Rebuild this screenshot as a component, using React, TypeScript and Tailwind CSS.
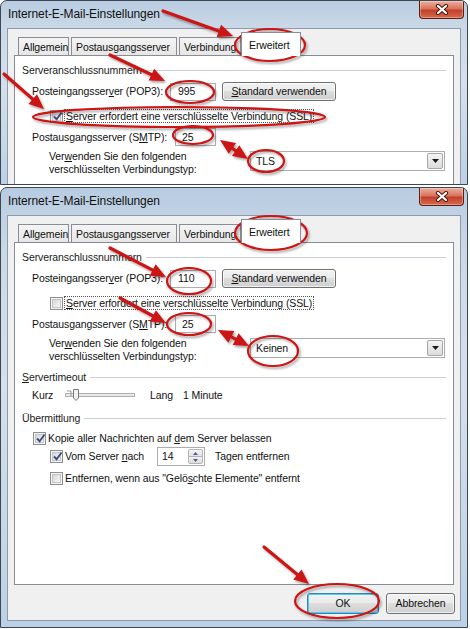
import type { ReactNode } from 'react';

const RED = '#cc1313';

function CloseBtn() {
  return (
    <div className="ml-auto mr-[3px] flex h-[18px] w-[45px] items-center justify-center rounded-b-[4px] border border-t-0 border-[#5a2014] bg-[linear-gradient(180deg,#ebb0a0_0%,#d9735d_45%,#c3402a_55%,#d86a4e_100%)] shadow-[inset_0_0_0_1px_rgba(255,255,255,0.3)]">
      <svg width="14" height="11" viewBox="0 0 14 11">
        <path d="M3 2 L11 9 M11 2 L3 9" stroke="#4a1a10" strokeWidth="4.2" strokeLinecap="round" />
        <path d="M3 2 L11 9 M11 2 L3 9" stroke="#ffffff" strokeWidth="2.2" strokeLinecap="round" />
      </svg>
    </div>
  );
}

function TitleBar() {
  return (
    <div className="flex h-[27px] items-start">
      <span className="mt-[6px] pl-[7px] text-[12px] leading-[15px] tracking-[-0.1px] text-[#111]">Internet-E-Mail-Einstellungen</span>
      <CloseBtn />
    </div>
  );
}

function Tab({ w, children }: { w: string; children: ReactNode }) {
  return (
    <div
      className={`flex h-[18px] shrink-0 items-start overflow-hidden border border-b-0 border-[#898c95] bg-[linear-gradient(180deg,#f4f4f4,#e6e6e6)] pl-[4px] pt-[3px] leading-[13px] ${w}`}
    >
      {children}
    </div>
  );
}

function Tabs() {
  return (
    <div className="flex h-[23px] items-end gap-[2px] pl-[10px]">
      <Tab w="w-[51px]">Allgemein</Tab>
      <Tab w="w-[106px]">Postausgangsserver</Tab>
      <Tab w="w-[62px]">Verbindung</Tab>
      <div className="relative z-10 -mb-px -ml-[2px] flex h-[24px] w-[60px] shrink-0 items-start border border-b-0 border-[#898c95] bg-white pl-[7px] pt-[6px] leading-[13px]">
        Erweitert
      </div>
    </div>
  );
}

function Group({ children }: { children: ReactNode }) {
  return (
    <div className="flex h-[14px] items-center pl-[7px] pr-[7px]">
      <span className="text-[#1a1a1a]">{children}</span>
      <div className="ml-[4px] h-px flex-1 bg-[#c8cfd6]" />
    </div>
  );
}

function Check({ checked }: { checked?: boolean }) {
  return (
    <span className="flex h-[13px] w-[13px] shrink-0 items-center justify-center border border-[#8e8f8f] bg-[#f4f4f4]">
      <span className="relative flex h-[9px] w-[9px] items-center justify-center border border-[#c4c4c4] bg-[linear-gradient(135deg,#d6d6d6,#f8f8f8)]">
        {checked && (
          <svg width="11" height="11" viewBox="0 0 11 11" className="absolute -left-[1px] -top-[2px]">
            <path d="M2 5.5 L4.6 8.2 L9.6 1.5" fill="none" stroke="#3a4f85" strokeWidth="1.9" />
          </svg>
        )}
      </span>
    </span>
  );
}

function Field({ className, children }: { className: string; children: ReactNode }) {
  return (
    <div className={`flex h-[18px] shrink-0 items-center border border-[#abadb3] bg-white ${className}`}>{children}</div>
  );
}

function Btn({ className, children }: { className: string; children: ReactNode }) {
  return (
    <div
      className={`flex shrink-0 items-center justify-center rounded-[3px] border border-[#707070] bg-[linear-gradient(180deg,#f2f2f2_0%,#ebebeb_45%,#dddddd_50%,#cfcfcf_100%)] shadow-[inset_0_0_0_1px_rgba(255,255,255,0.7)] ${className}`}
    >
      {children}
    </div>
  );
}

function Select({ value }: { value: string }) {
  return (
    <div className="mt-[1px] flex h-[20px] w-[195px] shrink-0 items-center border border-[#abadb3] bg-white pl-[5px]">
      <span>{value}</span>
      <div className="ml-auto mr-[1px] flex h-[16px] w-[16px] items-center justify-center rounded-[2px] border border-[#a6a6a6] bg-[linear-gradient(180deg,#f4f4f4,#dcdcdc)]">
        <svg width="7" height="4" viewBox="0 0 7 4">
          <path d="M0 0 H7 L3.5 4 Z" fill="#1a1a1a" />
        </svg>
      </div>
    </div>
  );
}

function PortRows({ pop3, ssl, enc }: { pop3: string; ssl: boolean; enc: string }) {
  return (
    <>
      <div className="mt-[7px]">
        <Group>Serveranschlussnummern</Group>
      </div>
      <div className="mt-[5px] flex h-[19px] items-center pl-[17px]">
        <span className="w-[138px] shrink-0">
          Posteingangsser<u>v</u>er (POP3):
        </span>
        <Field className="w-[46px] pl-[7px]">{pop3}</Field>
        <Btn className="ml-[6px] h-[19px] w-[114px]">
          <span>
            <u>S</u>tandard verwenden
          </span>
        </Btn>
      </div>
      <div className="mt-[8px] flex h-[14px] items-center pl-[35px]">
        <Check checked={ssl} />
        <span className="ml-[1px] border border-dotted border-[#555] px-[1px] leading-[12px]">
          <u>S</u>erver erfordert eine verschlüsselte Verbindung (SSL)
        </span>
      </div>
      <div className="mt-[5px] flex h-[18px] items-center pl-[17px]">
        <span className="w-[143px] shrink-0">
          Postausgangsserver (S<u>M</u>TP):
        </span>
        <Field className="w-[41px] pl-[6px]">25</Field>
      </div>
      <div className="mt-[4px] flex pl-[34px]">
        <div className="w-[201px] shrink-0 leading-[13px]">
          Ver<u>w</u>enden Sie den folgenden
          <br />
          verschlüsselten Verbindungstyp:
        </div>
        <Select value={enc} />
      </div>
    </>
  );
}

function Slider() {
  return (
    <svg width="70" height="14" viewBox="0 0 70 14">
      <rect x="0.5" y="5.5" width="69" height="3" fill="#e7eaea" stroke="#b0b0b0" />
      <path d="M2 3 H6 V8" fill="none" stroke="#9a9a9a" strokeWidth="1" />
      <path d="M8.5 1.5 H13.5 V10 L11 12.5 L8.5 10 Z" fill="#f1f1f1" stroke="#7a7a7a" />
    </svg>
  );
}

function Spinner() {
  return (
    <div className="flex h-[19px] w-[48px] shrink-0 items-center border border-[#abadb3] bg-white pl-[4px]">
      <span>14</span>
      <div className="ml-auto mr-px flex h-[15px] w-[15px] flex-col">
        <div className="flex h-[8px] items-center justify-center rounded-t-[2px] border border-[#b5b5b5] bg-[linear-gradient(180deg,#f6f6f6,#e2e2e2)]">
          <svg width="5" height="3" viewBox="0 0 5 3">
            <path d="M0 3 H5 L2.5 0 Z" fill="#4b6189" />
          </svg>
        </div>
        <div className="-mt-px flex h-[8px] items-center justify-center rounded-b-[2px] border border-[#b5b5b5] bg-[linear-gradient(180deg,#f0f0f0,#dedede)]">
          <svg width="5" height="3" viewBox="0 0 5 3">
            <path d="M0 0 H5 L2.5 3 Z" fill="#4b6189" />
          </svg>
        </div>
      </div>
    </div>
  );
}

const frame =
  'w-[468px] rounded-t-[7px] border border-[#3d4753] bg-[linear-gradient(180deg,#b8cce1_0%,#cbd9e7_15%,#d5e0eb_45%,#bcd1e6_100%)]';

function DialogOne() {
  return (
    <div className={`h-[185px] overflow-hidden ${frame}`}>
      <TitleBar />
      <div className="mx-[6px] h-[200px] border border-[#8c9aad] bg-[#f0f0f0] pt-[3px]">
        <Tabs />
        <div className="ml-[6px] h-[200px] w-[440px] border border-[#898c95] bg-white">
          <PortRows pop3="995" ssl enc="TLS" />
        </div>
      </div>
    </div>
  );
}

function DialogTwo() {
  return (
    <div className={`mt-[2px] pb-[6px] ${frame}`}>
      <TitleBar />
      <div className="mx-[6px] border border-[#8c9aad] bg-[#f0f0f0] pb-[6px] pt-[3px]">
        <Tabs />
        <div className="ml-[6px] h-[343px] w-[440px] border border-[#898c95] bg-white">
          <PortRows pop3="110" ssl={false} enc="Keinen" />
          <div className="mt-[7px]">
            <Group>
              <u>S</u>ervertimeout
            </Group>
          </div>
          <div className="mt-[4px] flex h-[14px] items-center pl-[17px]">
            <span className="w-[33px] shrink-0">Kurz</span>
            <Slider />
            <span className="ml-[15px] w-[33px] shrink-0">Lang</span>
            <span>1 Minute</span>
          </div>
          <div className="mt-[9px]">
            <Group>Übermittlung</Group>
          </div>
          <div className="mt-[6px] flex h-[14px] items-center pl-[18px]">
            <Check checked />
            <span className="ml-[2px]">
              Kopie aller Nachrichten auf <u>d</u>em Server belassen
            </span>
          </div>
          <div className="mt-[2px] flex h-[19px] items-center pl-[35px]">
            <Check checked />
            <span className="ml-[2px] w-[92px] shrink-0">
              Vom Server <u>n</u>ach
            </span>
            <Spinner />
            <span className="ml-[10px]">Tagen entfernen</span>
          </div>
          <div className="mt-[5px] flex h-[14px] items-center pl-[35px]">
            <Check />
            <span className="ml-[2px]">
              Entfernen, wenn aus "Gelö<u>s</u>chte Elemente" entfernt
            </span>
          </div>
        </div>
        <div className="mt-[8px] flex justify-end gap-[7px] pr-[5px]">
          <div className="flex h-[21px] w-[72px] items-center justify-center rounded-[3px] border border-[#3c7fb1] bg-[linear-gradient(180deg,#f2f2f2_0%,#ebebeb_45%,#dddddd_50%,#cfcfcf_100%)] shadow-[inset_0_0_0_1px_#48d0f5]">
            OK
          </div>
          <Btn className="h-[21px] w-[69px]">Abbrechen</Btn>
        </div>
      </div>
    </div>
  );
}

type Pt = [number, number];

function arrowHead(from: Pt, to: Pt, len = 15, half = 6.5) {
  const dx = to[0] - from[0];
  const dy = to[1] - from[1];
  const d = Math.hypot(dx, dy);
  const ux = dx / d;
  const uy = dy / d;
  const bx = to[0] - ux * len;
  const by = to[1] - uy * len;
  return `${to[0]},${to[1]} ${bx - uy * half},${by + ux * half} ${bx + uy * half},${by - ux * half}`;
}

function Arrow({ from, to, both }: { from: Pt; to: Pt; both?: boolean }) {
  const dx = to[0] - from[0];
  const dy = to[1] - from[1];
  const d = Math.hypot(dx, dy);
  const ux = dx / d;
  const uy = dy / d;
  const s: Pt = both ? [from[0] + ux * 10, from[1] + uy * 10] : from;
  const e: Pt = [to[0] - ux * 10, to[1] - uy * 10];
  return (
    <g>
      <line x1={s[0]} y1={s[1]} x2={e[0]} y2={e[1]} stroke={RED} strokeWidth="3.2" strokeLinecap="round" />
      <polygon points={arrowHead(from, to)} fill={RED} />
      {both && <polygon points={arrowHead(to, from)} fill={RED} />}
    </g>
  );
}

const ellipses: [number, number, number, number][] = [
  [270, 45, 35, 16],
  [190, 92, 24, 11],
  [179, 117, 146, 10],
  [193, 135, 20, 9],
  [266, 161, 18, 11],
  [271, 233, 36, 17],
  [189, 281, 22, 13],
  [189, 324, 22, 11],
  [273, 351, 25, 15],
  [337, 601, 42, 17],
];

function Annotations() {
  return (
    <svg className="pointer-events-none absolute left-0 top-0" width="470" height="629" viewBox="0 0 470 629">
      <defs>
        <filter id="sh" x="-10%" y="-10%" width="130%" height="140%">
          <feDropShadow dx="1.5" dy="2" stdDeviation="1.2" floodColor="#000" floodOpacity="0.35" />
        </filter>
      </defs>
      <g filter="url(#sh)">
        {ellipses.map(([cx, cy, rx, ry], i) => (
          <ellipse key={i} cx={cx} cy={cy} rx={rx} ry={ry} fill="none" stroke={RED} strokeWidth="2.2" />
        ))}
        <Arrow from={[163, 11]} to={[233, 36]} />
        <Arrow from={[110, 55]} to={[165, 81]} />
        <Arrow from={[4, 74]} to={[44, 109]} />
        <Arrow from={[220, 140]} to={[248, 159]} both />
        <Arrow from={[110, 248]} to={[166, 277]} />
        <Arrow from={[120, 298]} to={[166, 323]} />
        <Arrow from={[218, 330]} to={[249, 346]} both />
        <Arrow from={[264, 547]} to={[309, 584]} />
      </g>
    </svg>
  );
}

export default function App() {
  return (
    <div className="relative h-[629px] w-[470px] overflow-hidden whitespace-nowrap bg-white font-['Liberation_Sans',Arial,sans-serif] text-[10.5px] leading-[13px] tracking-[-0.1px] text-[#111]">
      <DialogOne />
      <DialogTwo />
      <Annotations />
    </div>
  );
}
